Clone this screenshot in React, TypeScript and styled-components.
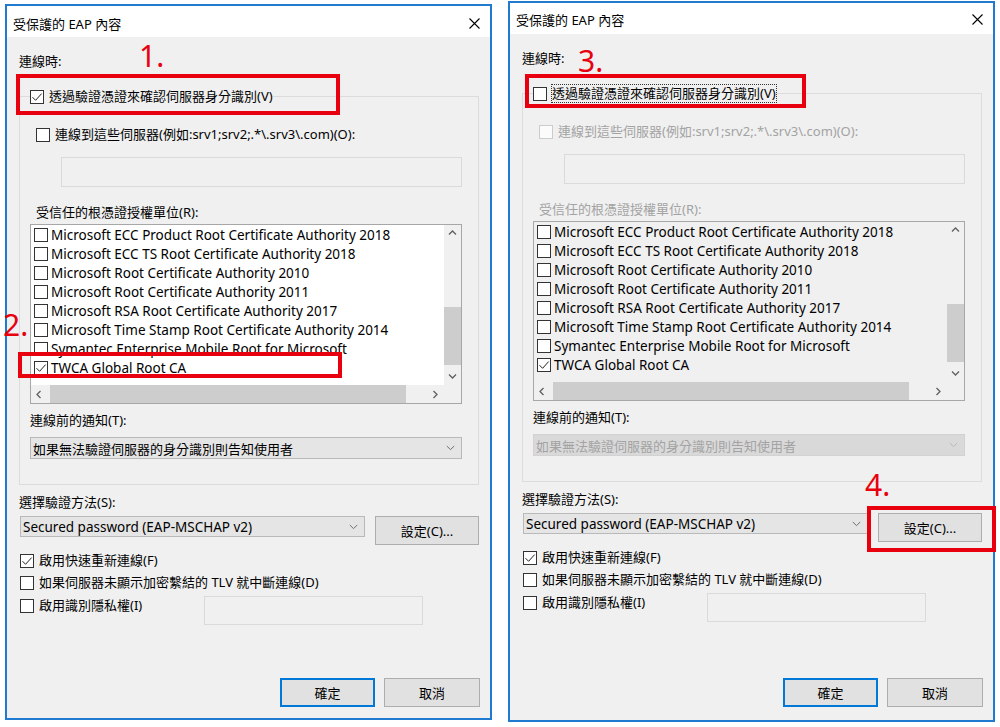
import React from 'react';
import styled, { createGlobalStyle, css } from 'styled-components';

const GlobalStyle = createGlobalStyle`
  html, body { margin: 0; padding: 0; background: #fff; }
  body {
    font-family: "Noto Sans", "Noto Sans CJK TC", sans-serif;
    font-size: 13px;
    color: #000;
  }
  * { box-sizing: border-box; }
`;

const Page = styled.div`
  display: flex;
  align-items: flex-start;
  gap: 16px;
  padding-left: 5px;
  width: 1000px;
  height: 727px;
  overflow: hidden;
`;

const Dialog = styled.div<{ $top: number; $height: number }>`
  position: relative;
  flex: none;
  margin-top: ${p => p.$top}px;
  width: 487px;
  height: ${p => p.$height}px;
  border: 2px solid #1f7ad0;
  background: #f0f0f0;
  display: flex;
  flex-direction: column;
`;

const TitleBar = styled.div<{ $shift: number }>`
  flex: none;
  height: 31px;
  background: #fff;
  display: flex;
  align-items: center;
  justify-content: space-between;
  padding: ${p => p.$shift}px 10px 0 6px;
`;

const TitleText = styled.span`
  font-size: 13px;
  white-space: nowrap;
`;

const Body = styled.div<{ $padBottom: number }>`
  flex: 1;
  display: flex;
  flex-direction: column;
  align-items: flex-start;
  padding: 15px 10px ${p => p.$padBottom}px 12px;
`;

const Label = styled.div<{ $indent?: number; $mt?: number; $disabled?: boolean }>`
  height: 18px;
  line-height: 18px;
  white-space: nowrap;
  margin-left: ${p => p.$indent ?? 0}px;
  margin-top: ${p => p.$mt ?? 0}px;
  color: ${p => (p.$disabled ? '#a3a3a3' : '#000')};
`;

const CheckRow = styled.label<{ $indent?: number; $mt?: number; $width?: number }>`
  flex: none;
  display: flex;
  align-items: center;
  gap: 5px;
  height: 19px;
  line-height: 19px;
  white-space: nowrap;
  margin-left: ${p => p.$indent ?? 0}px;
  margin-top: ${p => p.$mt ?? 0}px;
  ${p => p.$width && css`width: ${p.$width}px;`}
`;

const Box = styled.span<{ $disabled?: boolean }>`
  flex: none;
  width: 14px;
  height: 14px;
  border: 1px solid ${p => (p.$disabled ? '#cccccc' : '#333333')};
  background: ${p => (p.$disabled ? '#fbfbfb' : '#ffffff')};
  display: flex;
  align-items: center;
  justify-content: center;
`;

const CheckText = styled.span<{ $disabled?: boolean; $focus?: boolean }>`
  white-space: nowrap;
  color: ${p => (p.$disabled ? '#a3a3a3' : '#000')};
  ${p =>
    p.$focus &&
    css`
      outline: 1px dotted #333;
      outline-offset: -1px;
      padding: 0 1px;
      margin-left: -1px;
    `}
`;

const Group = styled.fieldset`
  margin: 17px 0 0 0;
  padding: 0 16px 25px 10px;
  border: 1px solid #dcdcdc;
  width: 460px;
  min-width: 0;
  display: flex;
  flex-direction: column;
  align-items: flex-start;
`;

const Legend = styled.legend`
  padding: 0;
  margin: 0;
  height: 19px;
  background: #f0f0f0;
`;

const TextField = styled.div<{ $ml: number; $width: number; $mt: number }>`
  margin-left: ${p => p.$ml}px;
  margin-top: ${p => p.$mt}px;
  width: ${p => p.$width}px;
  height: 30px;
  border: 1px solid #dadada;
  background: #f0f0f0;
`;

const CertList = styled.div<{ $disabled?: boolean }>`
  margin-top: 3px;
  width: 432px;
  height: 180px;
  border: 1px solid #a7a7a7;
  background: ${p => (p.$disabled ? '#f0f0f0' : '#ffffff')};
  display: grid;
  grid-template-columns: 1fr 17px;
  grid-template-rows: 1fr 18px;
`;

const Rows = styled.div`
  overflow: hidden;
  padding-left: 3px;
`;

const CertRow = styled.div`
  height: 19px;
  display: flex;
  align-items: center;
  gap: 3px;
  white-space: nowrap;
  font-size: 13.5px;
`;

const VBar = styled.div`
  background: #f0f0f0;
  display: flex;
  flex-direction: column;
`;

const HBar = styled.div`
  background: #f0f0f0;
  display: flex;
  align-items: stretch;
`;

const Corner = styled.div`
  background: #f0f0f0;
`;

const ArrowCell = styled.div<{ $push?: boolean }>`
  flex: none;
  width: 17px;
  height: 17px;
  display: flex;
  align-items: center;
  justify-content: center;
  ${p => p.$push && css`margin-top: auto;`}
`;

const HArrowCell = styled.div<{ $push?: boolean }>`
  flex: none;
  width: 17px;
  display: flex;
  align-items: center;
  justify-content: center;
  ${p => p.$push && css`margin-left: auto;`}
`;

const VThumb = styled.div`
  width: 17px;
  height: 58px;
  margin-top: 65px;
  background: #cdcdcd;
`;

const HThumb = styled.div`
  width: 356px;
  margin-left: 2px;
  background: #cdcdcd;
`;

const Combo = styled.div<{ $width: number; $height: number; $mt: number; $disabled?: boolean; $latin?: boolean }>`
  flex: none;
  margin-top: ${p => p.$mt}px;
  width: ${p => p.$width}px;
  height: ${p => p.$height}px;
  border: 1px solid ${p => (p.$disabled ? '#d2d2d2' : '#b9b9b9')};
  background: ${p => (p.$disabled ? '#d9d9d9' : '#e5e5e5')};
  color: ${p => (p.$disabled ? '#a3a3a3' : '#000')};
  font-size: ${p => (p.$latin ? '13.5px' : '13px')};
  display: flex;
  align-items: center;
  justify-content: space-between;
  padding: 0 6px 0 2px;
  white-space: nowrap;
`;

const MethodRow = styled.div`
  display: flex;
  align-items: flex-start;
  gap: 10px;
  margin-top: 5px;
  margin-left: 1px;
`;

const Button = styled.button<{ $width: number; $default?: boolean }>`
  flex: none;
  width: ${p => p.$width}px;
  height: 29px;
  font: inherit;
  color: #000;
  background: #e1e1e1;
  border: ${p => (p.$default ? '2px solid #0078d7' : '1px solid #adadad')};
  border-radius: 0;
  padding: 0;
  display: flex;
  align-items: center;
  justify-content: center;
`;

const PrivacyRow = styled.div`
  display: flex;
  align-items: flex-start;
  margin-top: 4px;
  margin-left: 1px;
`;

const PrivacyField = styled.div`
  width: 219px;
  height: 29px;
  border: 1px solid #dadada;
  background: #f0f0f0;
`;

const Footer = styled.div`
  margin-top: auto;
  align-self: stretch;
  display: flex;
  justify-content: flex-end;
  gap: 9px;
`;

const Mark = styled.div<{ $x: number; $y: number; $w: number; $h: number }>`
  position: absolute;
  left: ${p => p.$x}px;
  top: ${p => p.$y}px;
  width: ${p => p.$w}px;
  height: ${p => p.$h}px;
  border: 4px solid #e8000e;
  pointer-events: none;
`;

const Step = styled.span<{ $x: number; $y: number }>`
  position: absolute;
  left: ${p => p.$x}px;
  top: ${p => p.$y}px;
  font-family: "Noto Sans", sans-serif;
  font-size: 30px;
  line-height: 30px;
  color: #e8000e;
  pointer-events: none;
`;

const CloseIcon = () => (
  <svg width="11" height="11" viewBox="0 0 11 11">
    <path d="M0.5 0.5 L10.5 10.5 M10.5 0.5 L0.5 10.5" stroke="#000" strokeWidth="1.1" fill="none" />
  </svg>
);

const Tick = () => (
  <svg width="12" height="12" viewBox="0 0 12 12">
    <path d="M1.5 6.2 L4.6 9.3 L10.6 2.6" stroke="#222" strokeWidth="1" fill="none" />
  </svg>
);

const Chevron = ({ dir, color = '#606060' }: { dir: 'up' | 'down' | 'left' | 'right'; color?: string }) => {
  const d = {
    up: 'M1 5.5 L4.5 2 L8 5.5',
    down: 'M1 2.5 L4.5 6 L8 2.5',
    left: 'M5.5 1 L2 4.5 L5.5 8',
    right: 'M2.5 1 L6 4.5 L2.5 8',
  }[dir];
  return (
    <svg width="9" height="9" viewBox="0 0 9 9">
      <path d={d} stroke={color} strokeWidth="1.3" fill="none" />
    </svg>
  );
};

const ComboChevron = ({ color }: { color: string }) => (
  <svg width="9" height="6" viewBox="0 0 9 6">
    <path d="M0.8 1 L4.5 4.6 L8.2 1" stroke={color} strokeWidth="1" fill="none" />
  </svg>
);

const CheckBox = ({ checked, disabled }: { checked?: boolean; disabled?: boolean }) => (
  <Box $disabled={disabled}>{checked && <Tick />}</Box>
);

const certs = [
  { name: 'Microsoft ECC Product Root Certificate Authority 2018', checked: false },
  { name: 'Microsoft ECC TS Root Certificate Authority 2018', checked: false },
  { name: 'Microsoft Root Certificate Authority 2010', checked: false },
  { name: 'Microsoft Root Certificate Authority 2011', checked: false },
  { name: 'Microsoft RSA Root Certificate Authority 2017', checked: false },
  { name: 'Microsoft Time Stamp Root Certificate Authority 2014', checked: false },
  { name: 'Symantec Enterprise Mobile Root for Microsoft', checked: false },
  { name: 'TWCA Global Root CA', checked: true },
];

function EapDialog({ after }: { after: boolean }) {
  return (
    <Dialog $top={after ? 1 : 4} $height={after ? 721 : 716}>
      <TitleBar $shift={after ? 2 : 4}>
        <TitleText>受保護的 EAP 內容</TitleText>
        <CloseIcon />
      </TitleBar>
      <Body $padBottom={after ? 13 : 11}>
        <Label>連線時:</Label>
        <Group>
          <Legend>
            <CheckRow>
              <CheckBox checked={!after} />
              <CheckText $focus={after}>透過驗證憑證來確認伺服器身分識別(V)</CheckText>
            </CheckRow>
          </Legend>
          <CheckRow $indent={6} $mt={19}>
            <CheckBox disabled={after} />
            <CheckText $disabled={after}>{'連線到這些伺服器(例如:srv1;srv2;.*\\.srv3\\.com)(O):'}</CheckText>
          </CheckRow>
          <TextField $ml={31} $width={401} $mt={13} />
          <Label $indent={6} $mt={16} $disabled={after}>
            受信任的根憑證授權單位(R):
          </Label>
          <CertList $disabled={after}>
            <Rows>
              {certs.map(c => (
                <CertRow key={c.name}>
                  <CheckBox checked={c.checked} />
                  <span>{c.name}</span>
                </CertRow>
              ))}
            </Rows>
            <VBar>
              <ArrowCell>
                <Chevron dir="up" />
              </ArrowCell>
              <VThumb />
              <ArrowCell $push>
                <Chevron dir="down" />
              </ArrowCell>
            </VBar>
            <HBar>
              <HArrowCell>
                <Chevron dir="left" />
              </HArrowCell>
              <HThumb />
              <HArrowCell $push>
                <Chevron dir="right" />
              </HArrowCell>
            </HBar>
            <Corner />
          </CertList>
          <Label $mt={7}>連線前的通知(T):</Label>
          <Combo $width={432} $height={22} $mt={8} $disabled={after}>
            <span>如果無法驗證伺服器的身分識別則告知使用者</span>
            <ComboChevron color={after ? '#b8b8b8' : '#707070'} />
          </Combo>
        </Group>
        <Label $mt={8}>選擇驗證方法(S):</Label>
        <MethodRow>
          <Combo $width={345} $height={21} $mt={0} $latin>
            <span>Secured password (EAP-MSCHAP v2)</span>
            <ComboChevron color="#707070" />
          </Combo>
          <Button $width={104}>設定(C)...</Button>
        </MethodRow>
        <CheckRow $indent={1} $mt={6}>
          <CheckBox checked />
          <CheckText>啟用快速重新連線(F)</CheckText>
        </CheckRow>
        <CheckRow $indent={1} $mt={3}>
          <CheckBox />
          <CheckText>如果伺服器未顯示加密繫結的 TLV 就中斷連線(D)</CheckText>
        </CheckRow>
        <PrivacyRow>
          <CheckRow $width={184}>
            <CheckBox />
            <CheckText>啟用識別隱私權(I)</CheckText>
          </CheckRow>
          <PrivacyField />
        </PrivacyRow>
        <Footer>
          <Button $width={95} $default>
            確定
          </Button>
          <Button $width={96}>取消</Button>
        </Footer>
      </Body>
      {after ? (
        <>
          <Step $x={68} $y={43}>3.</Step>
          <Mark $x={15} $y={71} $w={281} $h={34} />
          <Step $x={355} $y={467}>4.</Step>
          <Mark $x={357} $y={503} $w={129} $h={46} />
        </>
      ) : (
        <>
          <Step $x={132} $y={35}>1.</Step>
          <Mark $x={9} $y={68} $w={324} $h={41} />
          <Step $x={-4} $y={304}>2.</Step>
          <Mark $x={11} $y={346} $w={324} $h={26} />
        </>
      )}
    </Dialog>
  );
}

export default function App() {
  return (
    <>
      <GlobalStyle />
      <Page>
        <EapDialog after={false} />
        <EapDialog after />
      </Page>
    </>
  );
}
